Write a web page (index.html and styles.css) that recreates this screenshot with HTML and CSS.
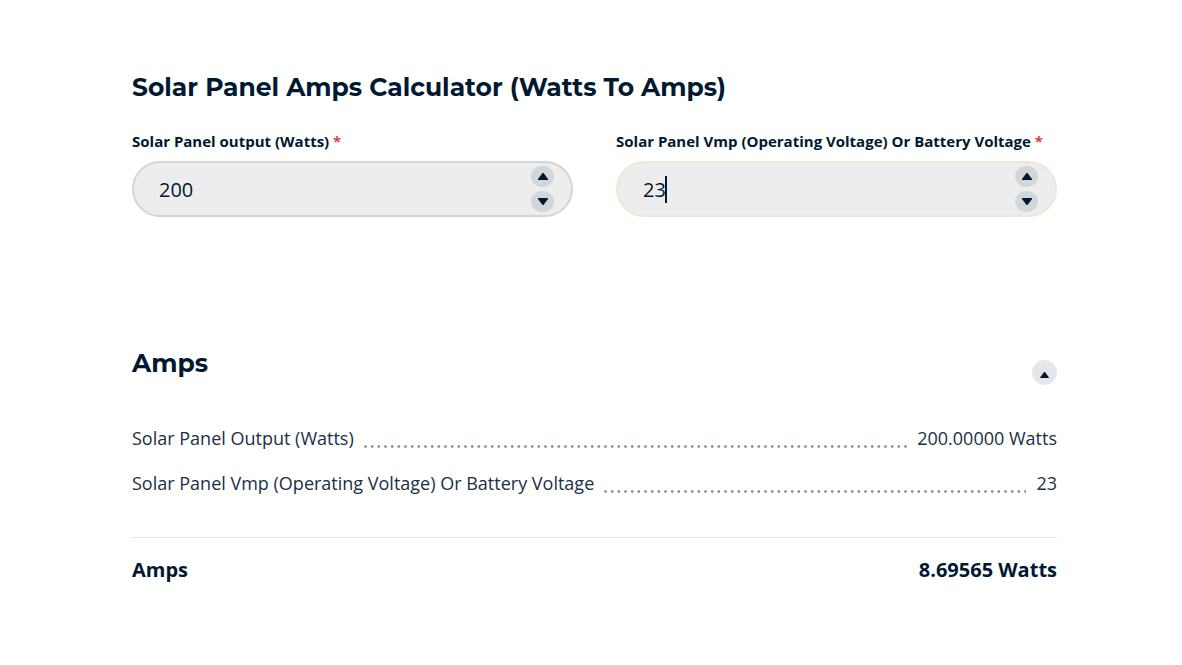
FILE: index.html
```html
<!DOCTYPE html>
<html lang="en">
<head>
    <meta charset="UTF-8">
    <meta name="viewport" content="width=device-width, initial-scale=1">
    <title>Solar Panel Amps Calculator</title>
    <link rel="stylesheet" href="styles.css">
</head>
<body>
    <main class="calculator">
        <form class="calc-form">
            <h2 class="calc-title">Solar Panel Amps Calculator (Watts To Amps)</h2>
            <div class="fields">
                <div class="field">
                    <label for="watts">Solar Panel output (Watts) <span class="required">*</span></label>
                    <div class="input-wrap">
                        <input type="text" inputmode="numeric" id="watts" value="200" required>
                        <div class="stepper">
                            <button type="button" class="step-btn" aria-label="Increase"><svg viewBox="0 0 10 7"><path d="M4.5 0H5.5L10 6V7H0V6z"/></svg></button>
                            <button type="button" class="step-btn" aria-label="Decrease"><svg viewBox="0 0 10 7"><path d="M0 0H10V1L5.5 7H4.5L0 1z"/></svg></button>
                        </div>
                    </div>
                </div>
                <div class="field">
                    <label for="voltage">Solar Panel Vmp (Operating Voltage) Or Battery Voltage <span class="required">*</span></label>
                    <div class="input-wrap active">
                        <input type="text" inputmode="numeric" id="voltage" value="23" required>
                        <span class="caret"></span>
                        <div class="stepper">
                            <button type="button" class="step-btn" aria-label="Increase"><svg viewBox="0 0 10 7"><path d="M4.5 0H5.5L10 6V7H0V6z"/></svg></button>
                            <button type="button" class="step-btn" aria-label="Decrease"><svg viewBox="0 0 10 7"><path d="M0 0H10V1L5.5 7H4.5L0 1z"/></svg></button>
                        </div>
                    </div>
                </div>
            </div>
        </form>

        <!-- Results -->
        <section class="summary">
            <div class="summary-header">
                <h2 class="calc-title">Amps</h2>
                <button type="button" class="toggle-btn" aria-label="Collapse"><svg viewBox="0 0 10 7"><path d="M4.5 0H5.5L10 6V7H0V6z"/></svg></button>
            </div>
            <div class="summary-list">
                <div class="summary-row">
                    <span>Solar Panel Output (Watts)</span>
                    <span class="dots"></span>
                    <span class="value">200.00000 Watts</span>
                </div>
                <div class="summary-row">
                    <span>Solar Panel Vmp (Operating Voltage) Or Battery Voltage</span>
                    <span class="dots"></span>
                    <span class="value">23</span>
                </div>
            </div>
            <div class="summary-total">
                <span>Amps</span>
                <span>8.69565 Watts</span>
            </div>
        </section>
    </main>
</body>
</html>
```
FILE: styles.css
```css
* {
    box-sizing: border-box;
}

body {
    margin: 0;
    background: #fff;
    color: #001931;
    font-family: "Open Sans", "Noto Sans", sans-serif;
}

.calculator {
    padding: 70px 125px 48px 132px;
}

.calc-title {
    margin: 0;
    font-family: Montserrat, Inter, sans-serif;
    font-size: 25px;
    font-weight: 700;
    line-height: 34px;
}

.fields {
    display: flex;
    gap: 43px;
    margin-top: 27px;
}

.field {
    flex: 1;
    min-width: 0;
}

.field label {
    display: block;
    margin-bottom: 9px;
    font-size: 15px;
    font-weight: 700;
    line-height: 21px;
    white-space: nowrap;
}

.required {
    color: #d94545;
}

.input-wrap {
    position: relative;
    display: flex;
    align-items: center;
    height: 56px;
    padding: 0 17px 0 25px;
    background: #ededed;
    border: 2px solid #d1d6da;
    border-radius: 28px;
}

.input-wrap.active {
    border-color: #eee8d5;
}

.input-wrap input {
    flex: 1;
    min-width: 0;
    padding: 2px 0 0;
    border: none;
    outline: none;
    background: none;
    color: inherit;
    font-family: inherit;
    font-size: 20px;
    line-height: 28px;
}

.caret {
    position: absolute;
    left: 47px;
    top: 13px;
    width: 2px;
    height: 27px;
    background: #001931;
}

.stepper {
    display: flex;
    flex-direction: column;
    gap: 4px;
}

.step-btn,
.toggle-btn {
    display: flex;
    align-items: center;
    justify-content: center;
    padding: 0;
    border: none;
    border-radius: 50%;
    color: inherit;
    cursor: pointer;
}

.step-btn {
    width: 23px;
    height: 21px;
    background: #d1d6da;
}

.toggle-btn {
    width: 25px;
    height: 25px;
    padding-top: 5px;
    background: #e3e7ea;
}

.step-btn svg {
    width: 10px;
    height: 7px;
    fill: currentColor;
}

.toggle-btn svg {
    width: 9px;
    height: 6px;
    fill: currentColor;
}

.summary {
    margin-top: 129px;
}

.summary-header {
    display: flex;
    align-items: flex-end;
    justify-content: space-between;
    height: 39px;
}

.summary-header .calc-title {
    align-self: flex-start;
}

.summary-list {
    display: flex;
    flex-direction: column;
    gap: 20px;
    margin-top: 41px;
}

.summary-row {
    display: flex;
    font-size: 18px;
    line-height: 25px;
    color: #1a3046;
}

/* dotted leader, three dots per 20px tile */
.dots {
    flex: 1;
    height: 3px;
    margin: 19px 10px 0 10px;
    background: url("data:image/svg+xml,%3Csvg xmlns='http://www.w3.org/2000/svg' width='20' height='3' fill='%2374828f'%3E%3Ccircle cx='1.5' cy='1.5' r='1.3'/%3E%3Ccircle cx='8.2' cy='1.5' r='1.3'/%3E%3Ccircle cx='14.8' cy='1.5' r='1.3'/%3E%3C/svg%3E") repeat-x;
}

.summary-total {
    display: flex;
    justify-content: space-between;
    margin-top: 41px;
    padding-top: 18px;
    border-top: 1px solid #e3e5e7;
    font-size: 20px;
    font-weight: 700;
    line-height: 28px;
}
```
